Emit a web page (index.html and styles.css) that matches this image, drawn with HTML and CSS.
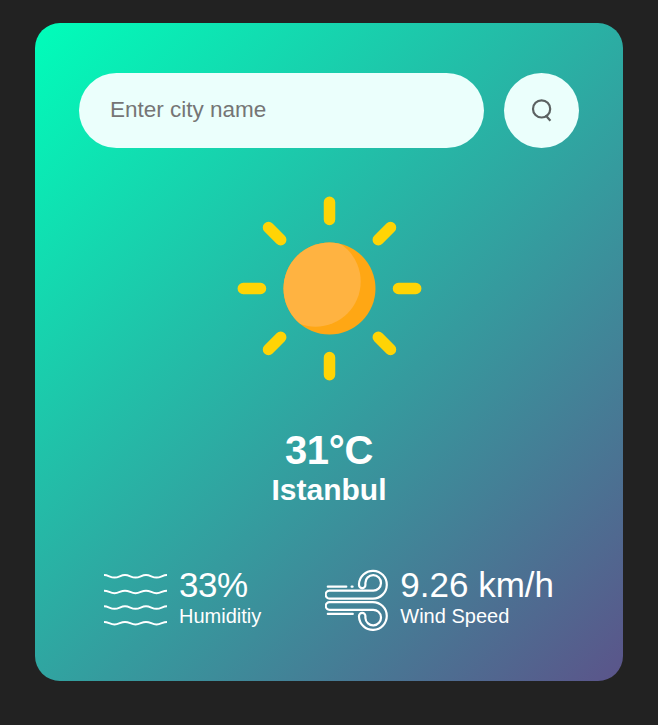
FILE: index.html
```
<!DOCTYPE html>
<html lang="en">
<head>
<meta charset="utf-8">
<title>Weather</title>
<link rel="stylesheet" href="styles.css">
</head>
<body>
<main class="card">
  <form class="search">
    <input class="search-input" type="text" placeholder="Enter city name">
    <button class="search-button" type="button" aria-label="Search">
      <svg width="24" height="26" viewBox="0 0 24 26" fill="none" stroke="#5c6262" stroke-width="2.2">
        <circle cx="11.600" cy="10.900" r="8.600"/>
        <path d="M15.600 17.200l4.800 5.600"/>
      </svg>
    </button>
  </form>
  <section class="weather">
    <svg class="sun" width="186" height="186" viewBox="-93.5 -93.5 186 186">
      <clipPath id="disc"><circle r="46"/></clipPath>
      <circle r="46" fill="#ffa714"/>
      <circle cx="-14" cy="-7" r="45.200" fill="#ffb341" clip-path="url(#disc)"/>
      <g stroke="#ffd405" stroke-width="11.500" stroke-linecap="round">
        <path d="M0-86.200V-69M0 69V86.200M-86.200 0H-69M69 0H86.200M-61-61L-48.800-48.800M61-61L48.800-48.800M-61 61L-48.800 48.800M61 61L48.800 48.800"/>
      </g>
    </svg>
    <h1 class="temp">31°C</h1>
    <h2 class="city">Istanbul</h2>
  </section>
  <section class="details">
    <div class="detail">
      <svg class="detail-icon" width="64" height="64" viewBox="0 0 64 64" fill="none" stroke="#fff" stroke-width="2">
        <path d="M0 7.100C4.500 7.100 6 9.600 10.500 9.600S16.500 7.100 21 7.100S27 9.600 31.500 9.600S37.500 7.100 42 7.100S48 9.600 52.500 9.600S58.500 7.100 63 7.100"/>
        <path d="M0 22.700C4.500 22.700 6 25.200 10.500 25.200S16.500 22.700 21 22.700S27 25.200 31.500 25.200S37.500 22.700 42 22.700S48 25.200 52.500 25.200S58.500 22.700 63 22.700"/>
        <path d="M0 38.300C4.500 38.300 6 40.800 10.500 40.800S16.500 38.300 21 38.300S27 40.800 31.500 40.800S37.500 38.300 42 38.300S48 40.800 52.500 40.800S58.500 38.300 63 38.300"/>
        <path d="M0 53.900C4.500 53.900 6 56.400 10.500 56.400S16.500 53.900 21 53.900S27 56.400 31.500 56.400S37.500 53.900 42 53.900S48 56.400 52.500 56.400S58.500 53.900 63 53.900"/>
      </svg>
      <div>
        <p class="value percent">33%</p>
        <p class="label">Humiditiy</p>
      </div>
    </div>
    <div class="detail">
      <svg class="detail-icon" width="64" height="64" viewBox="0.200 -0.500 64 64" fill="none" stroke="#fff" stroke-width="2.200" stroke-linecap="round">
        <path d="M4.500 22.200H48A7.800 7.800 0 1 0 40.600 14.500V16.500A3.200 3.200 0 0 1 34.200 16.500V15.500A13.900 13.900 0 1 1 48.100 30.100H4.800A3.900 3.900 0 0 1 4.800 22.200"/>
        <path d="M4.800 41.300H48A7.800 7.800 0 1 1 40.600 49.500V47.500A3.200 3.200 0 0 0 34.200 47.500V48.500A13.900 13.900 0 1 0 48.100 33.600H4.800A3.800 3.800 0 0 0 4.800 41.300"/>
        <path d="M3 18.200H21.500M26.800 18.200H27.800M3 45.400H28"/>
      </svg>
      <div>
        <p class="value">9.26 km/h</p>
        <p class="label">Wind Speed</p>
      </div>
    </div>
  </section>
</main>
</body>
</html>
```
FILE: styles.css
```
* {
  box-sizing: border-box;
  margin: 0;
  padding: 0;
  font-family: "Liberation Sans", Arial, sans-serif;
}

body {
  background: #222;
}

.card {
  width: 588px;
  height: 658px;
  margin: 23px auto 0;
  padding: 50px 44px 0;
  border-radius: 25px;
  background: linear-gradient(135deg, #00feba, #5b548a);
  color: #fff;
}

.search {
  display: flex;
  gap: 20px;
}

.search-input,
.search-button {
  height: 75px;
  border: 0;
  background: #ebfffc;
}

.search-input {
  width: 405px;
  padding: 0 31px 2px;
  border-radius: 38px;
  font-size: 22.5px;
  color: #555;
}

.search-input::placeholder {
  color: #757575;
}

.search-button {
  display: flex;
  align-items: center;
  justify-content: center;
  width: 75px;
  border-radius: 50%;
}

.weather {
  display: flex;
  flex-direction: column;
  align-items: center;
  padding-top: 47px;
}

.temp {
  margin-top: 46px;
  font-size: 40px;
  line-height: 46px;
  letter-spacing: -0.3px;
}

.city {
  font-size: 30px;
  line-height: 34px;
}

.details {
  display: flex;
  justify-content: space-between;
  padding: 58px 25px 0;
}

.detail {
  display: flex;
  gap: 11px;
}

.detail-icon {
  margin-top: 3px;
}

.value {
  font-size: 35px;
  line-height: 40px;
}

.percent {
  letter-spacing: -0.5px;
}

.label {
  font-size: 20px;
  line-height: 23px;
}
```
